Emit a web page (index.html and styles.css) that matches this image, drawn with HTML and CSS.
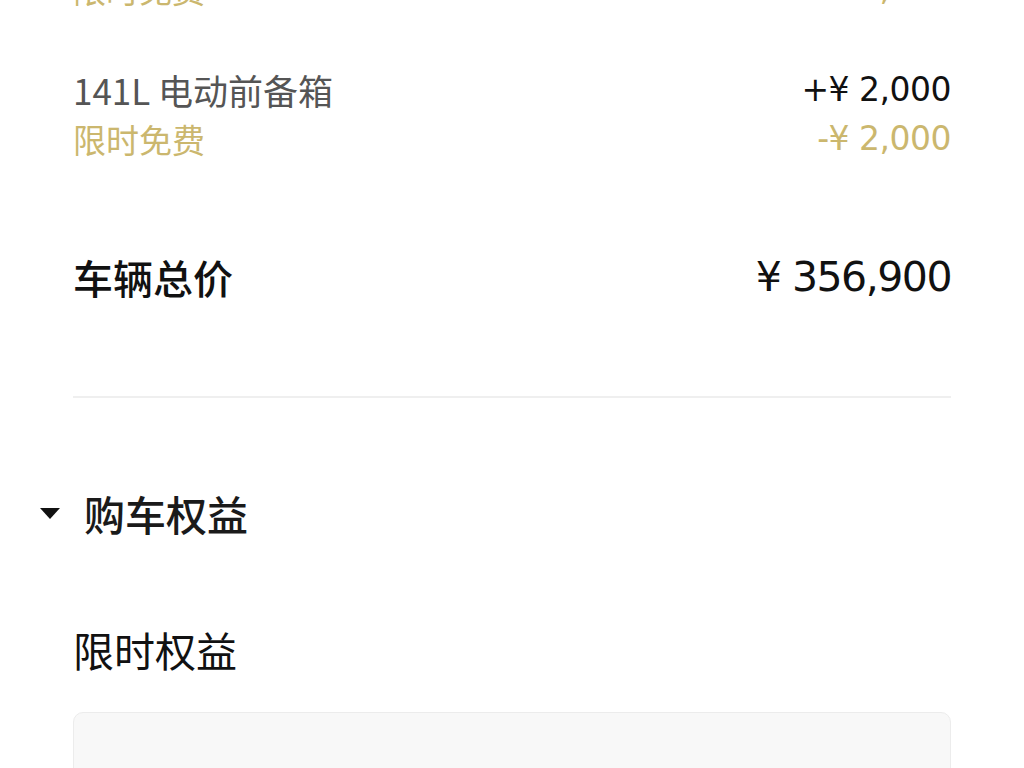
FILE: index.html
```html
<!DOCTYPE html>
<html lang="zh">
<head>
<meta charset="utf-8">
<link rel="stylesheet" href="styles.css">
</head>
<body>
<div class="page">
  <div class="item item-first">
    <div class="row">
      <span class="name">后备箱电动门</span>
      <span class="price">+¥ 2,000</span>
    </div>
    <div class="row gold">
      <span class="note">限时免费</span>
      <span class="price">-¥ 2,000</span>
    </div>
  </div>
  <div class="item">
    <div class="row">
      <span class="name">141L 电动前备箱</span>
      <span class="price">+¥ 2,000</span>
    </div>
    <div class="row gold">
      <span class="note">限时免费</span>
      <span class="price">-¥ 2,000</span>
    </div>
  </div>
  <div class="total">
    <span class="total-label">车辆总价</span>
    <span class="total-price">¥ 356,900</span>
  </div>
  <div class="divider"></div>
  <div class="section-head">
    <svg class="caret" width="20" height="11" viewBox="0 0 20 11"><path d="M0 0 H20 L10 11 Z" fill="#111"/></svg>
    <span>购车权益</span>
  </div>
  <div class="sub-head">限时权益</div>
  <div class="card"></div>
</div>
</body>
</html>
```
FILE: styles.css
```css
html, body {
  margin: 0;
  padding: 0;
  background: #fff;
  overflow: hidden;
  height: 768px;
}
body {
  font-family: "Noto Sans CJK SC", "Noto Sans", sans-serif;
  color: #111;
}
.page {
  padding: 0 73px;
}
.item {
  margin-bottom: 52px;
}
.item-first {
  margin-top: -85px;
}
.row {
  display: flex;
  justify-content: space-between;
  align-items: center;
  height: 49px;
}
.name {
  color: #555;
  font-size: 35px;
}
.note {
  font-size: 33px;
}
.price {
  font-family: "DejaVu Sans", "Noto Sans CJK SC", sans-serif;
  font-size: 33px;
  letter-spacing: -0.5px;
  color: #111;
}
.gold,
.gold .price {
  color: #cbb76e;
}
.total {
  display: flex;
  justify-content: space-between;
  align-items: center;
  height: 60px;
  margin-top: 84px;
}
.total-label {
  font-size: 40px;
  font-weight: 500;
}
.total-price {
  font-family: "DejaVu Sans", "Noto Sans CJK SC", sans-serif;
  font-size: 41px;
  letter-spacing: -1.5px;
}
.divider {
  height: 2px;
  background: #efefef;
  margin-top: 89px;
}
.section-head {
  display: flex;
  align-items: center;
  gap: 24px;
  margin-left: -33px;
  height: 60px;
  margin-top: 85px;
  font-size: 41px;
  font-weight: 500;
  color: #1a1a1a;
}
.sub-head {
  height: 60px;
  line-height: 60px;
  margin-top: 76px;
  font-size: 41px;
  color: #111;
}
.card {
  margin-top: 33px;
  height: 120px;
  background: #f8f8f8;
  border: 1px solid #ececec;
  border-radius: 10px;
}
```
